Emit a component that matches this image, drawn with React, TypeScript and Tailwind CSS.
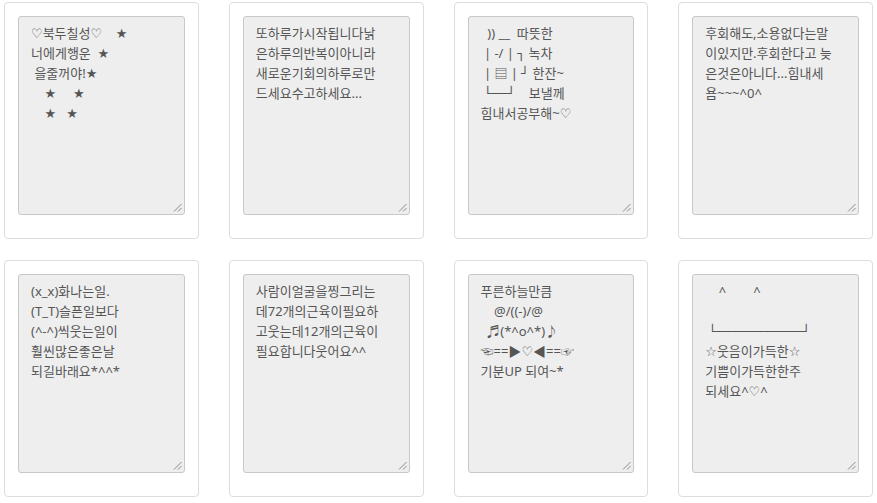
import React from "react";

const cards: string[][] = [
  [
    "♡북두칠성♡    ★",
    "너에게행운  ★",
    " 을줄꺼야!★",
    "    ★     ★",
    "    ★   ★",
  ],
  [
    "또하루가시작됩니다낡",
    "은하루의반복이아니라",
    "새로운기회의하루로만",
    "드세요수고하세요...",
  ],
  [
    "  )) __  따뜻한",
    " | -/ | ┐ 녹차",
    " | ▤ | ┘ 한잔~",
    " └──┘    보낼께",
    "힘내서공부해~♡",
  ],
  [
    "후회해도,소용없다는말",
    "이있지만.후회한다고 늦",
    "은것은아니다...힘내세",
    "욤~~~^0^",
  ],
  [
    "(x_x)화나는일.",
    "(T_T)슬픈일보다",
    "(^-^)씩웃는일이",
    "훨씬많은좋은날",
    "되길바래요*^^*",
  ],
  [
    "사람이얼굴을찡그리는",
    "데72개의근육이필요하",
    "고웃는데12개의근육이",
    "필요합니다웃어요^^",
  ],
  [
    "푸른하늘만큼",
    "    @/((-)/@",
    "  ♬(*^o^*)♪",
    "☜==▶♡◀==☞",
    "기분UP 되여~*",
  ],
  [
    "    ^        ^",
    " ",
    " └───────────┘",
    "☆웃음이가득한☆",
    "기쁨이가득한한주",
    "되세요^♡^",
  ],
];

const SYM = /([\u2500-\u257F\u2661\u2605\u2606])/;

function Line({ text }: { text: string }) {
  const parts = text.split(SYM);
  return (
    <div className="h-[20px]">
      {parts.map((p, i) =>
        SYM.test(p) && p.length === 1 ? (
          <span key={i} className="font-['DejaVu_Sans',sans-serif]">
            {p}
          </span>
        ) : (
          <span key={i}>{p}</span>
        )
      )}
    </div>
  );
}

function Grip() {
  return (
    <svg
      className="absolute right-[2px] bottom-[2px]"
      width="9"
      height="9"
      viewBox="0 0 9 9"
    >
      <line x1="1" y1="8.5" x2="8.5" y2="1" stroke="#8a8a8a" strokeWidth="1" />
      <line x1="5" y1="8.5" x2="8.5" y2="5" stroke="#8a8a8a" strokeWidth="1" />
    </svg>
  );
}

export default function App() {
  return (
    <div className="w-[877px] h-[503px] bg-white pt-[2px] px-[4px] font-['Noto_Sans','Noto_Sans_CJK_KR',sans-serif]">
      <div className="grid grid-cols-4 gap-x-[30px] gap-y-[21px]">
        {cards.map((lines, i) => (
          <div
            key={i}
            className="border border-[#dddddd] rounded-[4px] bg-white pt-[13px] px-[13px] pb-[23px]"
          >
            <div className="relative h-[199px] border border-[#c8c8c8] rounded-[3px] bg-[#eeeeee] pl-[12px] pt-[6px] whitespace-pre overflow-hidden text-[13px] leading-[20px] text-[#555555]">
              {lines.map((l, j) => (
                <Line key={j} text={l} />
              ))}
              <Grip />
            </div>
          </div>
        ))}
      </div>
    </div>
  );
}
